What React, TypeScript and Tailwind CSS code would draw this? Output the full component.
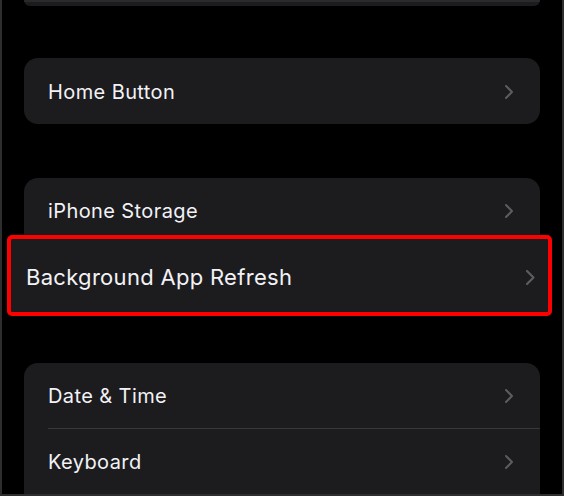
const font = "font-['Inter','Noto_Sans','Liberation_Sans',sans-serif]";

function Chevron({ big = false }: { big?: boolean }) {
  return big ? (
    <svg width="11" height="17" viewBox="0 0 11 17" fill="none">
      <polyline points="2,2 8.5,8.5 2,15" stroke="#5c5c61" strokeWidth="2.2" strokeLinecap="round" strokeLinejoin="round" />
    </svg>
  ) : (
    <svg width="10" height="16" viewBox="0 0 10 16" fill="none">
      <polyline points="2,2 8,8 2,14" stroke="#5c5c61" strokeWidth="2" strokeLinecap="round" strokeLinejoin="round" />
    </svg>
  );
}

function Row({ label }: { label: string }) {
  return (
    <div className="flex h-[65px] items-center justify-between pl-[24px] pr-[26px]">
      <span className="text-[20px] text-[#f2f2f7] tracking-[0.4px]">{label}</span>
      <Chevron />
    </div>
  );
}

export default function App() {
  return (
    <div className={`w-[564px] h-[496px] overflow-hidden bg-black border-x-2 border-b-2 border-[#2e2e2e] ${font}`}>
      <div className="px-[22px]">
        {/* end of previous group */}
        <div className="h-[6px] rounded-b-[14px] bg-[#1c1c1e] border-t-[2px] border-[#2a2a2c]" />

        <div className="mt-[52px] rounded-[14px] bg-[#1c1c1e]">
          <div className="h-[66px] flex items-center justify-between pl-[24px] pr-[26px] pt-[2px]">
            <span className="text-[20px] text-[#f2f2f7] tracking-[0.4px]">Home Button</span>
            <Chevron />
          </div>
        </div>

        <div className="mt-[54px] rounded-t-[14px] bg-[#1c1c1e]">
          <div className="h-[57px] flex items-center justify-between pl-[24px] pr-[26px] pt-[9px]">
            <span className="text-[20px] text-[#f2f2f7] tracking-[0.4px]">iPhone Storage</span>
            <Chevron />
          </div>
          <div className="-ml-[17px] -mr-[12px] h-[81px] flex items-center justify-between rounded-[5px] border-4 border-[#ff0000] bg-[#1c1c1e] pl-[15px] pr-[12px] pt-[4px]">
            <span className="text-[22px] text-[#f2f2f7] tracking-[0.3px]">Background App Refresh</span>
            <Chevron big />
          </div>
        </div>

        <div className="mt-[47px] rounded-t-[14px] bg-[#1c1c1e]">
          <Row label="Date & Time" />
          <div className="ml-[24px] h-px bg-[#38383a]" />
          <Row label="Keyboard" />
        </div>
      </div>
    </div>
  );
}
